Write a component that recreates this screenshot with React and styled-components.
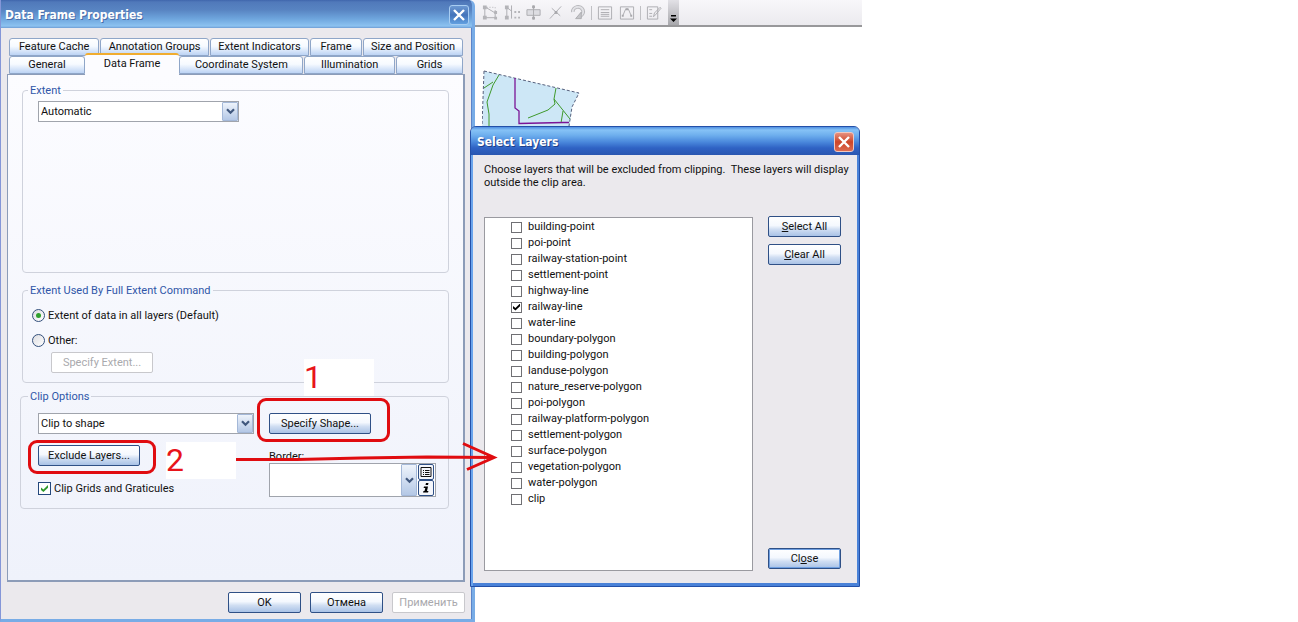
import React from "react";
import styled, { createGlobalStyle, css } from "styled-components";

const GlobalStyle = createGlobalStyle`
  *, *::before, *::after { box-sizing: border-box; }
  body { margin: 0; background: #fff; }
  body, button, select, input {
    font-family: Roboto, "Open Sans", sans-serif;
    font-size: 11px;
    line-height: 14px;
    color: #111;
  }
`;

const Desktop = styled.main`
  position: relative;
  min-height: 100vh;
  overflow: hidden;
`;

/* ---------- map application behind the dialogs ---------- */

const MapToolbar = styled.div`
  display: flex;
  align-items: center;
  width: 862px;
  height: 27px;
  padding-left: 482px;
  gap: 6px;
  background: linear-gradient(#f8f7fa, #ebeaee);
  border-bottom: 2px solid #98989a;
`;

const ToolButton = styled.button`
  display: flex;
  flex: none;
  width: 16px;
  height: 18px;
  padding: 0;
  border: 0;
  background: none;
  align-items: center;
`;

const ToolDivider = styled.span`
  flex: none;
  width: 1px;
  height: 14px;
  margin: 0 -1px;
  background: #c0c0c4;
`;

const OverflowButton = styled.button`
  display: flex;
  align-items: flex-end;
  justify-content: center;
  align-self: stretch;
  width: 11px;
  padding: 0 0 2px;
  border: 0;
  background: linear-gradient(#e2e1e6, #a8a8ac);
`;

const MapView = styled.div`
  padding: 43px 0 0 482px;
  line-height: 0;
`;

/* ---------- windows ---------- */

const Window = styled.section`
  position: absolute;
  display: flex;
  flex-direction: column;
  background: #ebe9ed;
`;

const PropertiesWindow = styled(Window)`
  left: 0;
  top: 0;
  width: 475px;
  border: solid #78ace6;
  border-width: 0 3px 3px 1px;
  border-left-color: #8496d8;
  border-radius: 0 6px 0 0;
  overflow: hidden;
  box-shadow: inset -1px 0 #5c84c8;
`;

const LayersWindow = styled(Window)`
  left: 470px;
  top: 126px;
  width: 390px;
  border: 1px solid #2450a8;
  border-radius: 6px 6px 0 0;
  box-shadow: inset 2px 0 #6aa4ec, inset -2px 0 #4a82d8, inset 0 -3px #4a82d8;
  padding-bottom: 3px;
`;

const TitleBar = styled.header`
  display: flex;
  align-items: center;
  justify-content: space-between;
  height: 28px;
  padding: 2px 3px 0 4px;
  background: linear-gradient(#3f66ac 0, #5079ba 2px, #5884c2 10px, #6fa6de 19px, #8cc2f0 26px, #6d9cd4 28px);

  ${(p) => p.$active && css`
    padding: 2px 5px 0 6px;
    border-radius: 5px 5px 0 0;
    background: linear-gradient(#4f8ee0 0, #86c2f6 3px, #6fb0ee 8px, #4a88dc 15px, #2f62c4 21px, #2a56b0 28px);
  `}
`;

const Title = styled.h1`
  margin: 0;
  font: 700 12px/18px "DejaVu Sans Condensed", "Open Sans", sans-serif;
  color: #fff;
  text-shadow: 1px 1px ${(p) => (p.$active ? "#1f3f88" : "#4a6ca8")};
`;

const CloseBox = styled.button`
  display: grid;
  place-items: center;
  width: 20px;
  height: 20px;
  padding: 0;
  border: 1px solid ${(p) => (p.$active ? "#f0c8c0" : "#a8cdf2")};
  border-radius: 3px;
  background: ${(p) =>
    p.$active
      ? "linear-gradient(#e69080, #cc4528 50%, #dc6a50)"
      : "linear-gradient(#6c98d2, #4474ba 50%, #62a0e0)"};
`;

/* ---------- controls ---------- */

const PushButton = styled.button`
  width: ${(p) => (p.$wide ? 102 : 73)}px;
  height: 21px;
  padding: 0;
  border: 1px solid #2f5086;
  border-radius: 2px;
  background: linear-gradient(#fff 0, #f4f8fe 45%, #d0def2 65%, #a9c2e6 100%);
  white-space: nowrap;

  ${(p) => p.$default && css`box-shadow: inset 0 0 0 1px #6f9fe0;`}

  &:disabled {
    border-color: #c8c8cc;
    background: #fff;
    color: #a9a9ad;
  }
`;

const SelectFrame = styled.div`
  position: relative;
  width: ${(p) => p.$width}px;
`;

const Select = styled.select`
  display: block;
  width: 100%;
  height: ${(p) => (p.$tall ? 34 : 21)}px;
  padding: 0 20px 0 2px;
  border: 1px solid #a0a4ac;
  border-radius: 0;
  appearance: none;
  background: #fff;
`;

const SelectArrow = styled.span`
  position: absolute;
  top: 1px;
  right: ${(p) => (p.$inset ? 19 : 1)}px;
  bottom: 1px;
  width: 16px;
  display: grid;
  place-items: center;
  border: 1px solid #a4b8d8;
  border-radius: 1px;
  background: linear-gradient(#eef3fb, #b4c8e6);
  pointer-events: none;
`;

const SideButtons = styled.div`
  position: absolute;
  top: 1px;
  right: 2px;
  display: grid;
`;

const MiniButton = styled.button`
  display: grid;
  place-items: center;
  width: 16px;
  height: 16px;
  padding: 0;
  border: 1px solid #2f5086;
  border-radius: 2px;
  background: #f4f6fb;
`;

const OptionLabel = styled.label`
  display: flex;
  align-items: center;
  gap: 3px;
  height: 15px;
  line-height: 15px;
  white-space: nowrap;
`;

const Radio = styled.input.attrs({ type: "radio" })`
  appearance: none;
  display: grid;
  place-items: center;
  width: 13px;
  height: 13px;
  margin: 0;
  border: 1px solid #34507c;
  border-radius: 50%;
  background: linear-gradient(135deg, #dcdce0, #fff);

  &:checked::after {
    content: "";
    width: 5px;
    height: 5px;
    border-radius: 50%;
    background: #2fa02c;
  }
`;

const CheckBox = styled.input.attrs({ type: "checkbox" })`
  appearance: none;
  display: grid;
  place-items: center;
  width: ${(p) => (p.$plain ? 11 : 13)}px;
  height: ${(p) => (p.$plain ? 11 : 13)}px;
  margin: 0;
  border: 1px solid ${(p) => (p.$plain ? "#707074" : "#24487c")};
  background: #fff;

  &:checked::after {
    content: "";
    width: 7px;
    height: 7px;
    background: ${(p) => (p.$plain ? "#000" : "#2f9a2c")};
    clip-path: polygon(0 35%, 35% 65%, 100% 0, 100% 40%, 35% 100%, 0 70%);
  }
`;

/* ---------- properties dialog ---------- */

const PropertiesBody = styled.div`
  padding: 10px 7px 6px 6px;
`;

const TabRow = styled.div`
  display: flex;
  align-items: flex-end;
  gap: 1px;
  margin: 0 2px;
  height: 18px;
`;

const Tab = styled.button`
  flex: ${(p) => p.$share} 1 0;
  height: 18px;
  padding: 0;
  border: 1px solid #8fa6c8;
  border-radius: 3px 3px 0 0;
  background: linear-gradient(#fff, #f6faff 45%, #bcd3f4);
  white-space: nowrap;

  ${(p) => p.$selected && css`
    position: relative;
    height: 22px;
    margin: 0 -1px -1px;
    padding-bottom: 2px;
    border-width: 2px 0 0;
    border-color: #f0ac30;
    background: #fcfcff;
  `}
`;

const TabPanel = styled.div`
  display: flex;
  flex-direction: column;
  min-height: 508px;
  padding: 8px 14px;
  border: 1px solid #8c9cb8;
  border-right-width: 2px;
  border-bottom-width: 2px;
  background: linear-gradient(#fcfcff, #eff2fb);
`;

const Group = styled.fieldset`
  margin: 0 0 ${(p) => p.$after || 0}px;
  padding: ${(p) => p.$top}px 15px 9px;
  min-height: ${(p) => p.$min || 0}px;
  border: 1px solid #cfd2dc;
  border-radius: 4px;
`;

const ClipGroup = styled(Group)`
  margin: 0 1px 0 -2px;
  padding: 10px 12px 11px 17px;
`;

const Legend = styled.legend`
  margin-left: -10px;
  padding: 0 2px;
  height: 14px;
  line-height: 16px;
  color: #2f56a8;
`;

const RadioStack = styled.div`
  display: grid;
  gap: 10px;
  margin-left: -6px;
`;

const Indented = styled.div`
  padding: 4px 0 0 13px;
`;

const ClipColumns = styled.div`
  display: flex;
  gap: 15px;
`;

const ClipColumn = styled.div`
  display: flex;
  flex-direction: column;
  align-items: flex-start;
  gap: 11px;
`;

const BorderField = styled.div`
  margin-top: 4px;
`;

const FieldLabel = styled.label`
  display: block;
  height: 14px;
  line-height: 16px;
`;

const Actions = styled.footer`
  display: flex;
  justify-content: flex-end;
  gap: 9px;
  padding-top: 10px;
`;

/* ---------- layer dialog ---------- */

const LayersBody = styled.div`
  padding: 8px 18px 12px 13px;
`;

const Hint = styled.p`
  margin: 0 -12px 0 0;
  height: 54px;
  line-height: 13px;
  white-space: pre-line;
`;

const LayersColumns = styled.div`
  display: flex;
  justify-content: space-between;
`;

const LayerList = styled.ul`
  width: 269px;
  min-height: 354px;
  margin: 0;
  padding: 1px 26px;
  border: 1px solid #9a9aa0;
  background: #fff;
  list-style: none;
`;

const LayerLabel = styled(OptionLabel)`
  gap: 6px;
  height: 16px;
  line-height: 16px;
`;

const ButtonColumn = styled.div`
  display: flex;
  flex-direction: column;
  gap: 7px;
  margin: -1px 0 2px;

  & > :last-child { margin-top: auto; }
`;

/* ---------- annotations drawn over the windows ---------- */

const Callout = styled.div`
  position: absolute;
  left: ${(p) => p.$x}px;
  top: ${(p) => p.$y}px;
  width: ${(p) => p.$w}px;
  height: ${(p) => p.$h}px;
  border: 3px solid #e00c10;
  border-radius: 9px;
  pointer-events: none;
`;

const StepNumber = styled.div`
  position: absolute;
  left: ${(p) => p.$x}px;
  top: ${(p) => p.$y}px;
  width: 70px;
  height: 37px;
  background: #fff;
  font: 32px/37px Roboto, sans-serif;
  color: #e8141a;
`;

const Arrow = styled.svg`
  position: absolute;
  left: 236px;
  top: 440px;
  pointer-events: none;
`;

const Cross = () => (
  <svg width="12" height="12" viewBox="0 0 12 12" stroke="#fff" strokeWidth="2.4" aria-hidden="true">
    <path d="M1 1 11 11M11 1 1 11" />
  </svg>
);

const Chevron = () => (
  <svg width="9" height="7" viewBox="0 0 9 7" fill="none" stroke="#41587e" strokeWidth="2.2" aria-hidden="true">
    <path d="M1 1.2 4.5 4.7 8 1.2" />
  </svg>
);

const toolIcons = [
  ["Edit vertices", <><path d="M3 3v11h11M4 3l10 6v5" /><path d="M5 3h9v4" strokeDasharray="1 2" /><path d="M1 1h4v4H1zM1 12h4v4H1zM13 7h3v3h-3zM13 13h3v3h-3z" fill="#b4b4b8" stroke="none" /></>],
  ["Reshape", <><path d="M3 3v11M3 3l5 4M8 1v14" /><path d="M1 1h4v4H1zM1 12h4v4H1zM11 7h2v2h-2zM15 7h2v2h-2zM11 13h2v2h-2zM15 13h2v2h-2z" fill="#b4b4b8" stroke="none" /></>],
  ["Cut polygons", <><path d="M1 5.5h14v6H1z" fill="#dddde2" /><path d="M8 1v15" /><path d="M6.500 1h3v3h-3zM6.500 13h3v3h-3z" fill="#a8a8ac" stroke="none" /></>],
  ["Split", <><path d="M2 15 14 2M4 4l9 8" /><path d="M7 7h3v3H7z" fill="#a8a8ac" stroke="none" /></>],
  ["Rotate", <><path d="M3 8a5.500 5 0 1 1 8 4" strokeWidth="4" stroke="#b8b8bc" /><path d="M3 8a5.500 5 0 1 1 8 4" strokeWidth="2" stroke="#e2e2e6" /><path d="M12 8v7H6z" fill="#c4c4c8" /></>],
  null,
  ["Attributes", <><path d="M1.500 2.500h14v13h-14z" /><path d="M4 5.500h9M4 8.500h9M4 10.500h9M4 12.500h9" /></>],
  ["Sketch properties", <><path d="M1.500 2.500h14v13h-14z" /><path d="m4 12 3-7h3l3 7" /><path d="M3 11h2v2H3zM12 11h2v2h-2zM7 4h3v2H7z" fill="#a8a8ac" stroke="none" /></>],
  null,
  ["Create features", <><path d="M1.500 2.500h11v13h-11z" /><path d="M3.500 5.500h3M3.500 9.500h3M3.500 12.500h3M8 13l1-4 6-6 1 1-6 7z" /></>],
];

const upperTabs = [["Feature Cache", 90], ["Annotation Groups", 109], ["Extent Indicators", 99], ["Frame", 51], ["Size and Position", 100]];
const lowerTabs = [["General", 75], ["Data Frame", 96], ["Coordinate System", 124], ["Illumination", 90], ["Grids", 66]];

const layers = [
  "building-point", "poi-point", "railway-station-point", "settlement-point", "highway-line",
  "railway-line", "water-line", "boundary-polygon", "building-polygon", "landuse-polygon",
  "nature_reserve-polygon", "poi-polygon", "railway-platform-polygon", "settlement-polygon",
  "surface-polygon", "vegetation-polygon", "water-polygon", "clip",
];

function MapApplication() {
  return (
    <>
      <MapToolbar>
        {toolIcons.map((icon, i) =>
          icon ? (
            <ToolButton key={i} aria-label={icon[0]}>
              <svg width="16" height="17" viewBox="0 0 17 17" fill="none" stroke="#acacb0">{icon[1]}</svg>
            </ToolButton>
          ) : (
            <ToolDivider key={i} />
          )
        )}
        <OverflowButton aria-label="Toolbar options">
          <svg width="7" height="8" viewBox="0 0 7 8"><path d="M1 0h5v1.500H1zM0 3.500h7L3.500 7z" /></svg>
        </OverflowButton>
      </MapToolbar>
      <MapView>
        <svg width="100" height="62" viewBox="482 70 100 62" fill="none" role="img" aria-label="Map of the clipped area">
          <path d="M484 71 579 93 572 107 569 132H482z" fill="#cde7f6" />
          <path d="M484 71 579 93 572 107 569 126M484 71 482 126" stroke="#56607c" strokeDasharray="3 2" />
          <path d="M499 75 493 85 487 102 489 114 489 130M484 88l9-6M556 88l-2 11 8 10 8 10M554 99l1 5-7 6-20 8M563 111l-2 12" stroke="#3f9a2c" />
          <path d="M515 78v30l4 3v12.500l44-1h6" stroke="#7a1496" strokeWidth="1.300" />
        </svg>
      </MapView>
    </>
  );
}

function Tabs({ items, selected }) {
  return (
    <TabRow role="tablist">
      {items.map(([name, share]) => (
        <Tab key={name} role="tab" aria-selected={name === selected} $share={share} $selected={name === selected}>
          {name}
        </Tab>
      ))}
    </TabRow>
  );
}

function PropertiesDialog() {
  return (
    <PropertiesWindow role="dialog" aria-label="Data Frame Properties">
      <TitleBar>
        <Title>Data Frame Properties</Title>
        <CloseBox aria-label="Close window"><Cross /></CloseBox>
      </TitleBar>
      <PropertiesBody>
        <Tabs items={upperTabs} />
        <Tabs items={lowerTabs} selected="Data Frame" />
        <TabPanel role="tabpanel">
          <Group $top={4} $min={190} $after={10}>
            <Legend>Extent</Legend>
            <SelectFrame $width={201}>
              <Select aria-label="Extent"><option>Automatic</option></Select>
              <SelectArrow><Chevron /></SelectArrow>
            </SelectFrame>
          </Group>
          <Group $top={11} $after={6}>
            <Legend>Extent Used By Full Extent Command</Legend>
            <RadioStack>
              <OptionLabel><Radio name="full" defaultChecked />Extent of data in all layers (Default)</OptionLabel>
              <OptionLabel><Radio name="full" />Other:</OptionLabel>
            </RadioStack>
            <Indented><PushButton $wide disabled>Specify Extent...</PushButton></Indented>
          </Group>
          <ClipGroup>
            <Legend>Clip Options</Legend>
            <ClipColumns>
              <ClipColumn>
                <SelectFrame $width={216}>
                  <Select aria-label="Clip mode"><option>Clip to shape</option></Select>
                  <SelectArrow><Chevron /></SelectArrow>
                </SelectFrame>
                <PushButton $wide>Exclude Layers...</PushButton>
                <BorderField>
                  <OptionLabel><CheckBox defaultChecked />Clip Grids and Graticules</OptionLabel>
                </BorderField>
              </ClipColumn>
              <ClipColumn>
                <PushButton $wide>Specify Shape...</PushButton>
                <BorderField>
                  <FieldLabel htmlFor="border">Border:</FieldLabel>
                  <SelectFrame $width={167}>
                    <Select id="border" $tall><option></option></Select>
                    <SelectArrow $inset><Chevron /></SelectArrow>
                    <SideButtons>
                      <MiniButton aria-label="Border styles">
                        <svg width="12" height="12" viewBox="0 0 12 12" fill="none" stroke="#111"><path d="M1 1.500h10v9H1zM3 4.500h1M5 4.500h4.500M3 6.500h1M5 6.500h4.500M3 8.500h1M5 8.500h4.500" /></svg>
                      </MiniButton>
                      <MiniButton aria-label="Border properties">
                        <svg width="8" height="10" viewBox="0 0 8 10"><path d="M4 0h2.500L6 2H3.500zM2 3.500h4L5 8h1.500l-.5 1.500H1L1.500 8h1l.8-3H1.600z" /></svg>
                      </MiniButton>
                    </SideButtons>
                  </SelectFrame>
                </BorderField>
              </ClipColumn>
            </ClipColumns>
          </ClipGroup>
        </TabPanel>
        <Actions>
          <PushButton>OK</PushButton>
          <PushButton>Отмена</PushButton>
          <PushButton disabled>Применить</PushButton>
        </Actions>
      </PropertiesBody>
    </PropertiesWindow>
  );
}

function LayersDialog() {
  return (
    <LayersWindow role="dialog" aria-label="Select Layers">
      <TitleBar $active>
        <Title $active>Select Layers</Title>
        <CloseBox $active aria-label="Close window"><Cross /></CloseBox>
      </TitleBar>
      <LayersBody>
        <Hint>{"Choose layers that will be excluded from clipping.\u00a0 These layers will display\noutside the clip area."}</Hint>
        <LayersColumns>
          <LayerList>
            {layers.map((name) => (
              <li key={name}>
                <LayerLabel><CheckBox $plain defaultChecked={name === "railway-line"} />{name}</LayerLabel>
              </li>
            ))}
          </LayerList>
          <ButtonColumn>
            <PushButton><u>S</u>elect All</PushButton>
            <PushButton><u>C</u>lear All</PushButton>
            <PushButton $default>Cl<u>o</u>se</PushButton>
          </ButtonColumn>
        </LayersColumns>
      </LayersBody>
    </LayersWindow>
  );
}

export default function App() {
  return (
    <>
      <GlobalStyle />
      <Desktop>
        <MapApplication />
        <PropertiesDialog />
        <LayersDialog />
        <StepNumber $x={304} $y={359}>1</StepNumber>
        <StepNumber $x={166} $y={442}>2</StepNumber>
        <Callout $x={257} $y={398} $w={133} $h={44} />
        <Callout $x={28} $y={440} $w={128} $h={34} />
        <Arrow width="262" height="34" viewBox="236 440 262 34" fill="none" stroke="#e00c10" strokeWidth="3" aria-hidden="true">
          <path d="M236 459.500H297L361 458 427 457 494 457.500M463 443.500 494 457.500 467 469.500" />
        </Arrow>
      </Desktop>
    </>
  );
}
